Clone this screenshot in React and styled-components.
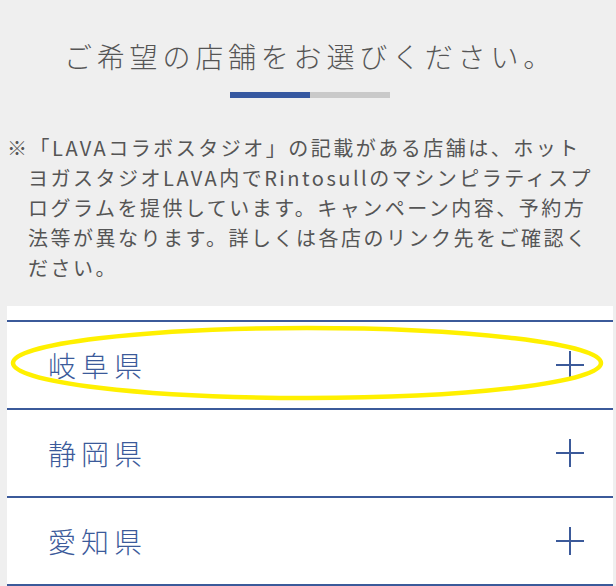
import React from 'react'
import styled, { createGlobalStyle } from 'styled-components'

const GlobalStyle = createGlobalStyle`
  html, body {
    margin: 0;
    padding: 0;
    background: #efefef;
  }
  body {
    font-family: "Noto Sans CJK JP", "Noto Sans", sans-serif;
  }
`

const Page = styled.div`
  width: 616px;
  padding: 0 3px 0 7px;
  box-sizing: border-box;
`

const Heading = styled.h2`
  margin: 0;
  padding-top: 35px;
  text-align: center;
  font-family: "Noto Sans CJK JP", serif;
  font-weight: 300;
  font-size: 28px;
  line-height: 42px;
  letter-spacing: 4.8px;
  color: #555;
`

const Progress = styled.div`
  display: flex;
  width: 160px;
  height: 6px;
  margin: 15px auto 0;
`

const ProgressPart = styled.span`
  flex: 1;
  background: ${p => (p.$active ? '#3658a0' : '#c9c9c9')};
`

const Note = styled.p`
  margin: 35px 0 0;
  padding-left: 21px;
  text-indent: -21px;
  font-size: 20px;
  line-height: 30px;
  letter-spacing: 2.5px;
  color: #555;
  white-space: nowrap;
`

const List = styled.ul`
  list-style: none;
  margin: 23px 0 0;
  padding: 14px 0 0;
  background: #fff;
  border-bottom: 2px solid #3b5a9a;
`

const Item = styled.li`
  position: relative;
  display: flex;
  align-items: center;
  justify-content: space-between;
  height: 86px;
  padding: 0 29px 0 41px;
  border-top: 2px solid #3b5a9a;
`

const Pref = styled.span`
  font-family: "Noto Sans CJK JP", serif;
  font-weight: 300;
  font-size: 28px;
  letter-spacing: 5px;
  color: #3b5a9a;
`

// yellow ring drawn over the first row in the screenshot
const Highlight = styled.svg`
  position: absolute;
  left: 2px;
  top: 3px;
  pointer-events: none;
`

const Plus = () => (
  <svg width="28" height="28" viewBox="0 0 28 28">
    <path d="M14 0v28M0 14h28" stroke="#3b5a9a" strokeWidth="2" fill="none" />
  </svg>
)

const prefs = ['岐阜県', '静岡県', '愛知県']

export default function App() {
  return (
    <Page>
      <GlobalStyle />
      <Heading>ご希望の店舗をお選びください。</Heading>
      <Progress>
        <ProgressPart $active />
        <ProgressPart />
      </Progress>
      <Note>
        ※「LAVAコラボスタジオ」の記載がある店舗は、ホット<br />
        ヨガスタジオLAVA内でRintosullのマシンピラティスプ<br />
        ログラムを提供しています。キャンペーン内容、予約方<br />
        法等が異なります。詳しくは各店のリンク先をご確認く<br />
        ださい。
      </Note>
      <List>
        {prefs.map((name, i) => (
          <Item key={name}>
            <Pref>{name}</Pref>
            <Plus />
            {i === 0 && (
              <Highlight width="600" height="80" viewBox="0 0 600 80">
                <ellipse cx="298" cy="38" rx="294" ry="35" fill="none" stroke="#fff000" strokeWidth="4.5" />
              </Highlight>
            )}
          </Item>
        ))}
      </List>
    </Page>
  )
}
